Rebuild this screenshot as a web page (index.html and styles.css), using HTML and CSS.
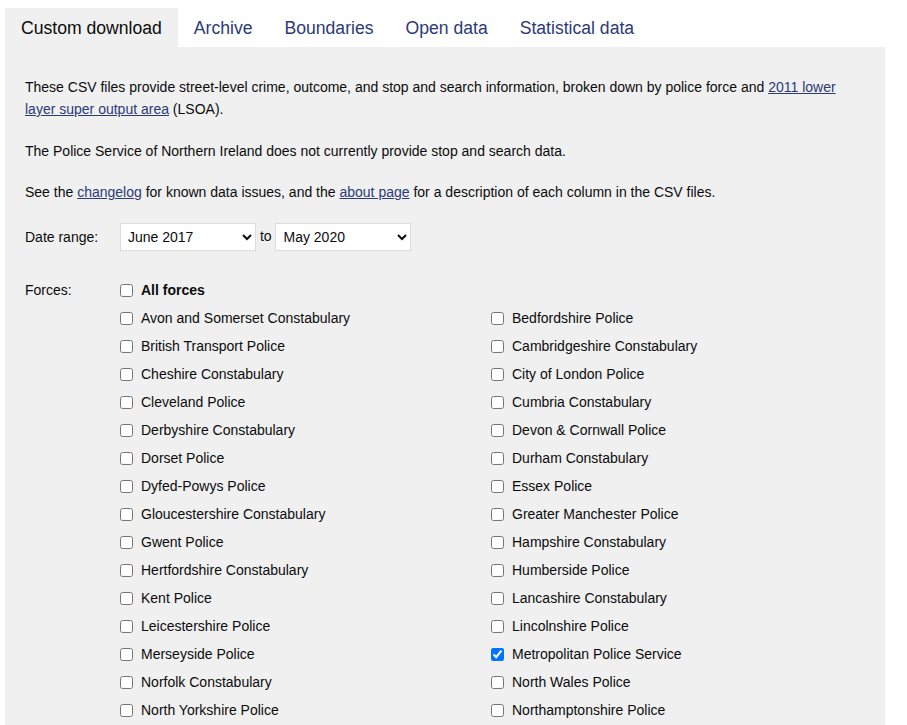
FILE: index.html
```html
<!DOCTYPE html>
<html lang="en">
<head>
<meta charset="utf-8">
<title>Data downloads</title>
<link rel="stylesheet" href="styles.css">
</head>
<body>
<nav class="tabs">
  <a class="tab active" href="#">Custom download</a>
  <a class="tab" href="#">Archive</a>
  <a class="tab" href="#">Boundaries</a>
  <a class="tab" href="#">Open data</a>
  <a class="tab" href="#">Statistical data</a>
</nav>
<main class="panel">
  <p>These CSV files provide street-level crime, outcome, and stop and search information, broken down by police force and <a href="#">2011 lower layer super output area</a> (LSOA).</p>
  <p>The Police Service of Northern Ireland does not currently provide stop and search data.</p>
  <p>See the <a href="#">changelog</a> for known data issues, and the <a href="#">about page</a> for a description of each column in the CSV files.</p>
  <div class="field date-field">
    <span class="field-label">Date range:</span>
    <div class="field-body">
      <select class="date-select"><option>June 2017</option></select> to <select class="date-select"><option>May 2020</option></select>
    </div>
  </div>
  <div class="field forces-field">
    <span class="field-label">Forces:</span>
    <div class="force-grid">
      <label class="force all"><input type="checkbox"><b>All forces</b></label>
      <label class="force"><input type="checkbox">Avon and Somerset Constabulary</label>
      <label class="force"><input type="checkbox">Bedfordshire Police</label>
      <label class="force"><input type="checkbox">British Transport Police</label>
      <label class="force"><input type="checkbox">Cambridgeshire Constabulary</label>
      <label class="force"><input type="checkbox">Cheshire Constabulary</label>
      <label class="force"><input type="checkbox">City of London Police</label>
      <label class="force"><input type="checkbox">Cleveland Police</label>
      <label class="force"><input type="checkbox">Cumbria Constabulary</label>
      <label class="force"><input type="checkbox">Derbyshire Constabulary</label>
      <label class="force"><input type="checkbox">Devon &amp; Cornwall Police</label>
      <label class="force"><input type="checkbox">Dorset Police</label>
      <label class="force"><input type="checkbox">Durham Constabulary</label>
      <label class="force"><input type="checkbox">Dyfed-Powys Police</label>
      <label class="force"><input type="checkbox">Essex Police</label>
      <label class="force"><input type="checkbox">Gloucestershire Constabulary</label>
      <label class="force"><input type="checkbox">Greater Manchester Police</label>
      <label class="force"><input type="checkbox">Gwent Police</label>
      <label class="force"><input type="checkbox">Hampshire Constabulary</label>
      <label class="force"><input type="checkbox">Hertfordshire Constabulary</label>
      <label class="force"><input type="checkbox">Humberside Police</label>
      <label class="force"><input type="checkbox">Kent Police</label>
      <label class="force"><input type="checkbox">Lancashire Constabulary</label>
      <label class="force"><input type="checkbox">Leicestershire Police</label>
      <label class="force"><input type="checkbox">Lincolnshire Police</label>
      <label class="force"><input type="checkbox">Merseyside Police</label>
      <label class="force"><input type="checkbox" checked>Metropolitan Police Service</label>
      <label class="force"><input type="checkbox">Norfolk Constabulary</label>
      <label class="force"><input type="checkbox">North Wales Police</label>
      <label class="force"><input type="checkbox">North Yorkshire Police</label>
      <label class="force"><input type="checkbox">Northamptonshire Police</label>
      <label class="force"><input type="checkbox">Northumbria Police</label>
      <label class="force"><input type="checkbox">Nottinghamshire Police</label>
      <label class="force"><input type="checkbox">Police Service of Northern Ireland</label>
      <label class="force"><input type="checkbox">South Wales Police</label>
      <label class="force"><input type="checkbox">South Yorkshire Police</label>
      <label class="force"><input type="checkbox">Staffordshire Police</label>
    </div>
  </div>
</main>
</body>
</html>
```
FILE: styles.css
```css
html, body {
  margin: 0;
  padding: 0;
  background: #ffffff;
}
body {
  padding: 8px 22px 0 5px;
  font-family: "Liberation Sans", Arial, sans-serif;
  font-size: 14px;
  color: #0b0c0c;
}
a {
  color: #2b3a78;
}
.tabs {
  display: flex;
}
.tab {
  display: block;
  padding: 10px 16px 8px 16px;
  font-size: 17.6px;
  line-height: 21px;
  text-decoration: none;
  color: #2b3a78;
}
.tab.active {
  background: #f0f0f0;
  color: #0b0c0c;
}
.panel {
  background: #f0f0f0;
  padding: 29px 20px 40px 20px;
  min-height: 700px;
}
.panel p {
  margin: 0 0 19.5px 0;
  line-height: 22px;
}
.field {
  display: flex;
}
.field-label {
  width: 95px;
  flex: none;
}
.date-field {
  align-items: center;
  margin-top: 20px;
}
.date-select {
  width: 136px;
  height: 28px;
  border: 1px solid #dcdcdc;
  border-radius: 0;
  background: #ffffff;
  font-family: "Liberation Sans", Arial, sans-serif;
  font-size: 14px;
  color: #0b0c0c;
  padding: 0 3px;
  vertical-align: middle;
}
.forces-field {
  margin-top: 25px;
  align-items: flex-start;
}
.forces-field .field-label {
  line-height: 28px;
}
.force-grid {
  display: grid;
  grid-template-columns: 371px 371px;
}
.force {
  display: flex;
  align-items: center;
  height: 28px;
  gap: 8px;
}
.force.all {
  grid-column: 1 / -1;
}
.force input {
  margin: 0;
  width: 13px;
  height: 13px;
}
```
